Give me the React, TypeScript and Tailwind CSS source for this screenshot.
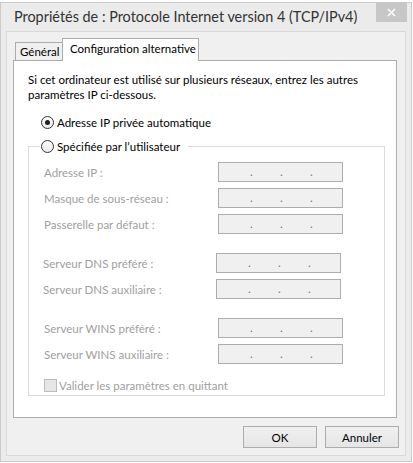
import React from "react";

const IpField = ({ shift = "" }: { shift?: string }) => (
  <div
    className={`flex h-[20px] w-[125px] items-center gap-[25px] border border-[#adadad] bg-[#f0f0f0] pl-[30px] ${shift}`}
  >
    {[0, 1, 2].map((i) => (
      <span key={i} className="w-[5px] text-center text-[12px] leading-[20px] text-[#7a7a7a]">
        .
      </span>
    ))}
  </div>
);

const FieldRow = ({ label, className = "", shift = "" }: { label: string; className?: string; shift?: string }) => (
  <div className={`flex h-[20px] items-center ${className}`}>
    <span className={`w-[174px] whitespace-nowrap text-[#a0a0a0] ${shift}`}>{label}</span>
    <IpField shift={shift} />
  </div>
);

const Radio = ({ checked }: { checked?: boolean }) => (
  <span className="flex h-[13px] w-[13px] shrink-0 items-center justify-center rounded-full border border-[#333] bg-gradient-to-b from-[#fcfcfc] to-[#ececec]">
    {checked && <span className="h-[5px] w-[5px] rounded-full bg-[#1f1f1f]" />}
  </span>
);

export default function App() {
  return (
    <div className="h-[463px] w-[413px] bg-white font-['Lato',sans-serif] text-[11.5px] leading-[15px] text-black">
      <div className="mt-[2px] flex h-[460px] w-[412px] flex-col border border-[#cbcbcb] bg-[#ebebeb]">
        {/* title bar */}
        <div className="flex h-[28px] shrink-0 items-start justify-between">
          <span className="whitespace-nowrap pl-[13px] pt-[4px] text-[14.4px] leading-[20px] text-[#333]">
            Propriétés de : Protocole Internet version 4 (TCP/IPv4)
          </span>
          <button className="-mt-px mr-[4px] flex h-[20px] w-[31px] shrink-0 items-center justify-center bg-[#c7c7c7]">
            <svg width="9" height="9" viewBox="0 0 9 9">
              <path d="M1 1 L8 8 M8 1 L1 8" stroke="white" strokeWidth="1.6" />
            </svg>
          </button>
        </div>

        {/* client area */}
        <div className="ml-[5px] flex h-[425px] w-[400px] flex-col border border-[#d9d9d9] bg-[#f0f0f0]">
          <div className="ml-[6px] pt-[6px]">
            {/* tabs */}
            <div className="flex items-end pl-[2px]">
              <div className="h-[18px] w-[48px] whitespace-nowrap border border-b-0 border-[#acacac] bg-[#f0f0f0] pl-[4px] leading-[17px]">
                Général
              </div>
              <div className="relative z-10 -mb-px -ml-px h-[23px] w-[137px] whitespace-nowrap border border-b-0 border-[#acacac] bg-white pl-[7px] leading-[19px]">
                Configuration alternative
              </div>
            </div>

            {/* panel */}
            <div className="h-[358px] w-[384px] border border-[#acacac] bg-white pl-[14px] pt-[11px]">
              <p className="whitespace-nowrap">
                Si cet ordinateur est utilisé sur plusieurs réseaux, entrez les autres
                <br />
                paramètres IP ci-dessous.
              </p>

              <div className="ml-[13px] mt-[13px] flex h-[15px] items-center gap-[3px]">
                <Radio checked />
                <span className="whitespace-nowrap">Adresse IP privée automatique</span>
              </div>

              <div className="mt-[16px] w-[357px] border border-[#dcdcdc] pb-[2px] pl-[15px]">
                <div className="-ml-[4px] -mt-[8px] flex h-[15px] w-[148px] items-center gap-[3px] bg-white pl-[1px]">
                  <Radio />
                  <span className="whitespace-nowrap">Spécifiée par l’utilisateur</span>
                </div>

                <FieldRow label="Adresse IP :" className="mt-[8px]" />
                <FieldRow label="Masque de sous-réseau :" className="mt-[6px]" />
                <FieldRow label="Passerelle par défaut :" className="mt-[6px]" />

                <FieldRow label="Serveur DNS préféré :" className="mt-[19px]" shift="-ml-px" />
                <FieldRow label="Serveur DNS auxiliaire :" className="mt-[6px]" shift="-ml-px" />

                <FieldRow label="Serveur WINS préféré :" className="mt-[19px]" />
                <FieldRow label="Serveur WINS auxiliaire :" className="mt-[6px]" />

                <div className="mt-[14px] flex h-[15px] items-center gap-[2px]">
                  <span className="h-[13px] w-[13px] shrink-0 border border-[#bcbcbc] bg-[#e6e6e6]" />
                  <span className="whitespace-nowrap text-[#a0a0a0]">Valider les paramètres en quittant</span>
                </div>
              </div>
            </div>
          </div>

          {/* buttons */}
          <div className="mt-[8px] flex justify-end gap-[8px] pr-[6px]">
            <button className="h-[22px] w-[74px] border border-[#acacac] bg-gradient-to-b from-[#f0f0f0] to-[#e5e5e5]">
              OK
            </button>
            <button className="h-[22px] w-[74px] border border-[#acacac] bg-gradient-to-b from-[#f0f0f0] to-[#e5e5e5]">
              Annuler
            </button>
          </div>
        </div>
      </div>
    </div>
  );
}
